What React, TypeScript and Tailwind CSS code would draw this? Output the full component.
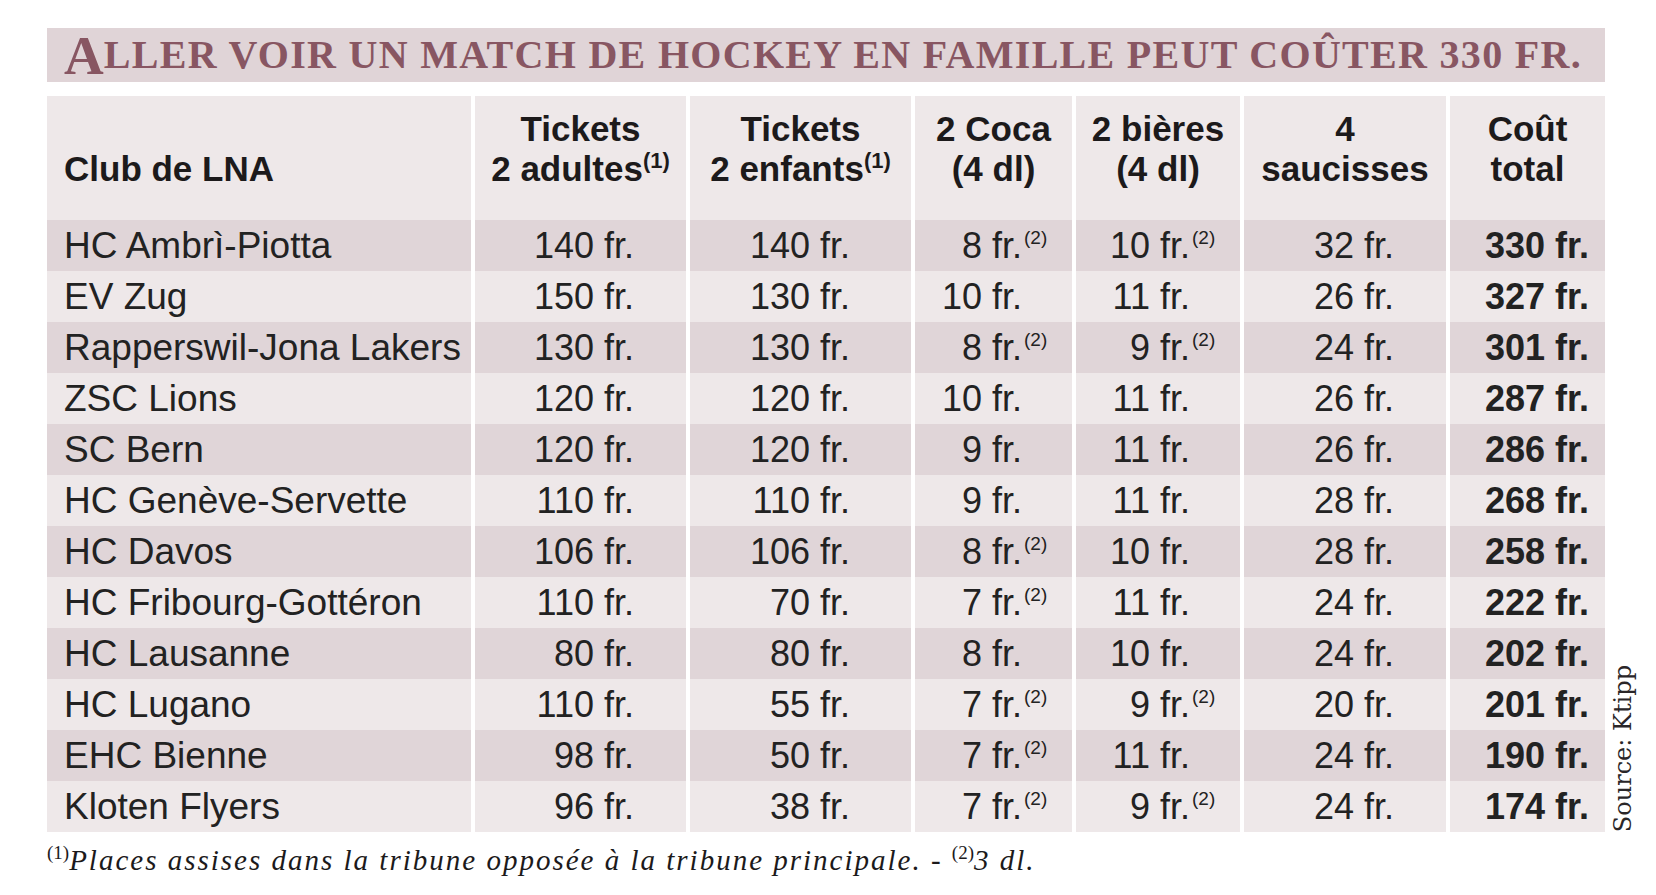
import type { ReactNode } from "react";

type Row = {
  club: string;
  adults: string;
  kids: string;
  coca: string;
  cocaNote?: boolean;
  beer: string;
  beerNote?: boolean;
  sausages: string;
  total: string;
};

const ROWS: Row[] = [
  { club: "HC Ambrì-Piotta", adults: "140", kids: "140", coca: "8", cocaNote: true, beer: "10", beerNote: true, sausages: "32", total: "330" },
  { club: "EV Zug", adults: "150", kids: "130", coca: "10", beer: "11", sausages: "26", total: "327" },
  { club: "Rapperswil-Jona Lakers", adults: "130", kids: "130", coca: "8", cocaNote: true, beer: "9", beerNote: true, sausages: "24", total: "301" },
  { club: "ZSC Lions", adults: "120", kids: "120", coca: "10", beer: "11", sausages: "26", total: "287" },
  { club: "SC Bern", adults: "120", kids: "120", coca: "9", beer: "11", sausages: "26", total: "286" },
  { club: "HC Genève-Servette", adults: "110", kids: "110", coca: "9", beer: "11", sausages: "28", total: "268" },
  { club: "HC Davos", adults: "106", kids: "106", coca: "8", cocaNote: true, beer: "10", sausages: "28", total: "258" },
  { club: "HC Fribourg-Gottéron", adults: "110", kids: "70", coca: "7", cocaNote: true, beer: "11", sausages: "24", total: "222" },
  { club: "HC Lausanne", adults: "80", kids: "80", coca: "8", beer: "10", sausages: "24", total: "202" },
  { club: "HC Lugano", adults: "110", kids: "55", coca: "7", cocaNote: true, beer: "9", beerNote: true, sausages: "20", total: "201" },
  { club: "EHC Bienne", adults: "98", kids: "50", coca: "7", cocaNote: true, beer: "11", sausages: "24", total: "190" },
  { club: "Kloten Flyers", adults: "96", kids: "38", coca: "7", cocaNote: true, beer: "9", beerNote: true, sausages: "24", total: "174" },
];

// superscript note that hangs right of the figure without shifting it
function Note({ n }: { n: number }) {
  return (
    <span className="inline-block w-0 whitespace-nowrap text-left">
      <span className="ml-[2px] align-[14px] text-[19px] leading-none">({n})</span>
    </span>
  );
}

function HeadCell({ children, left }: { children: ReactNode; left?: boolean }) {
  return (
    <div
      className={`flex h-[124px] flex-col justify-end bg-[#eee8e9] pb-[31px] text-[35px] font-bold leading-[40px] ${
        left ? "items-start pl-[17px]" : "items-center text-center"
      }`}
    >
      {children}
    </div>
  );
}

function HeadNote() {
  return <span className="align-[13px] text-[22px] leading-none">(1)</span>;
}

export default function App() {
  return (
    <div className="h-[895px] w-[1656px] bg-white pl-[47px] pt-[28px] text-[#1c1a1b]">
      {/* title band */}
      <div className="flex h-[54px] w-[1558px] items-center bg-[#e0d4d7] pl-[17px] font-['Liberation_Serif',serif] font-bold leading-none text-[#885662]">
        <span className="text-[55px]">A</span>
        <span className="text-[40px] tracking-[1.3px]">LLER VOIR UN MATCH DE HOCKEY EN FAMILLE PEUT COÛTER 330 FR.</span>
      </div>

      <div className="mt-[14px] flex items-end">
        <div className="grid grid-cols-[424px_211px_221px_157px_164px_202px_155px] gap-x-[4px] bg-white font-['Liberation_Sans',Arial,sans-serif]">
          <HeadCell left>
            <span>Club de LNA</span>
          </HeadCell>
          <HeadCell>
            <span>Tickets</span>
            <span>
              2 adultes<HeadNote />
            </span>
          </HeadCell>
          <HeadCell>
            <span>Tickets</span>
            <span>
              2 enfants<HeadNote />
            </span>
          </HeadCell>
          <HeadCell>
            <span>2 Coca</span>
            <span>(4 dl)</span>
          </HeadCell>
          <HeadCell>
            <span>2 bières</span>
            <span>(4 dl)</span>
          </HeadCell>
          <HeadCell>
            <span>4</span>
            <span>saucisses</span>
          </HeadCell>
          <HeadCell>
            <span>Coût</span>
            <span>total</span>
          </HeadCell>

          {ROWS.map((r, i) => {
            const bg = i % 2 === 0 ? "bg-[#e0d5d8]" : "bg-[#eee8e9]";
            const cell = `h-[51px] whitespace-nowrap text-[36px] leading-[51px] text-[#222] ${bg}`;
            return [
              <div key={`${i}-a`} className={`${cell} pl-[17px] text-[37px]`}>
                {r.club}
              </div>,
              <div key={`${i}-b`} className={`${cell} pr-[52px] text-right`}>
                {r.adults} fr.
              </div>,
              <div key={`${i}-c`} className={`${cell} pr-[61px] text-right`}>
                {r.kids} fr.
              </div>,
              <div key={`${i}-d`} className={`${cell} pr-[50px] text-right`}>
                {r.coca} fr.
                {r.cocaNote && <Note n={2} />}
              </div>,
              <div key={`${i}-e`} className={`${cell} pr-[50px] text-right`}>
                {r.beer} fr.
                {r.beerNote && <Note n={2} />}
              </div>,
              <div key={`${i}-f`} className={`${cell} pr-[52px] text-right`}>
                {r.sausages} fr.
              </div>,
              <div key={`${i}-g`} className={`${cell} pr-[16px] text-right font-bold text-[#1c1a1b]`}>
                {r.total} fr.
              </div>,
            ];
          })}
        </div>

        <div className="ml-[6px] font-['DejaVu_Serif',serif] text-[24px] leading-none text-[#2a2628] [writing-mode:vertical-rl] rotate-180">
          Source: Ktipp
        </div>
      </div>

      <p className="mt-[5px] font-['Liberation_Serif',serif] text-[29px] italic leading-[32px] tracking-[2px]">
        <span className="align-[11px] text-[19px] not-italic tracking-normal">(1)</span>Places assises dans la tribune opposée à la tribune principale. -{" "}
        <span className="align-[11px] text-[19px] not-italic tracking-normal">(2)</span>3 dl.
      </p>
    </div>
  );
}
